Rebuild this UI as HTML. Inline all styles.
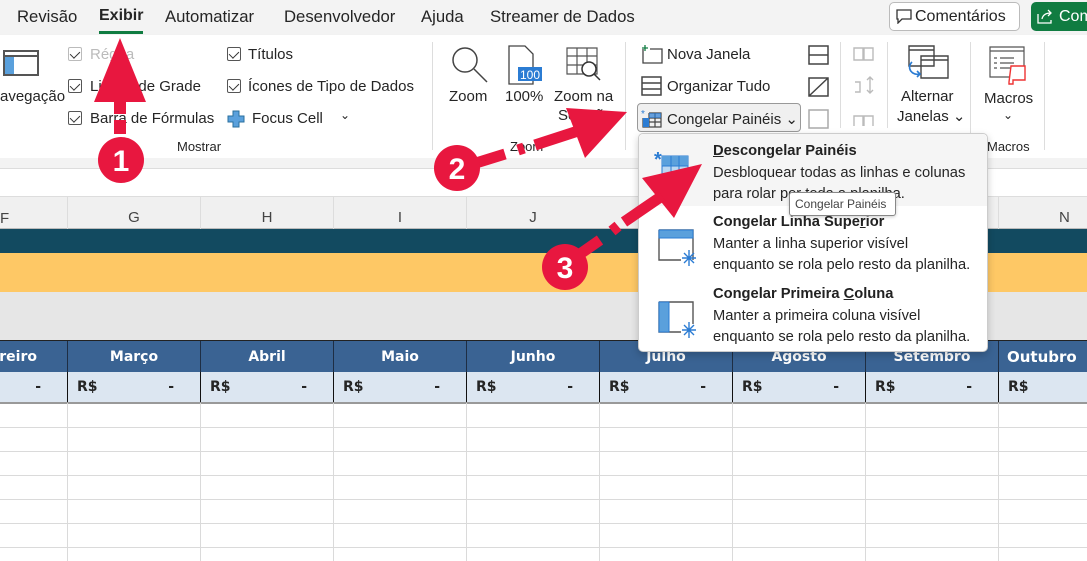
<!DOCTYPE html>
<html><head><meta charset="utf-8"><style>
*{margin:0;padding:0;box-sizing:border-box}
body{width:1087px;height:561px;overflow:hidden;position:relative;background:#fff;font-family:"Liberation Sans","DejaVu Sans",sans-serif;color:#252525}
.a{position:absolute;white-space:nowrap}
.t{font-size:16.7px;top:7px}
.r{font-size:15px}
.cb{position:absolute;width:14px;height:14px;border:1px solid #555;border-radius:2px;background:#fff}
.cb::after{content:"";position:absolute;left:3px;top:1px;width:5px;height:8px;border:solid #333;border-width:0 1.5px 1.5px 0;transform:rotate(45deg)}
.col{position:absolute;top:197px;height:32px;font-size:15px;color:#444;text-align:center;line-height:42px;border-left:1px solid #ddd}
.mh{position:absolute;top:341px;height:31px;background:#3a6393;color:#fff;font-weight:bold;text-align:center;line-height:33px;border-left:1px solid #1e2e44;font-family:"DejaVu Sans",sans-serif;font-size:14px}
.rs{position:absolute;top:372px;height:31px;background:#dce6f1;font-weight:bold;font-size:14px;line-height:31px;border-left:1.5px solid #111;padding-left:9px;font-family:"DejaVu Sans",sans-serif}
.rs span{position:absolute;right:26px}
.vl{position:absolute;top:403px;height:158px;width:1px;background:#dadada}
.hl{position:absolute;left:0;width:1087px;height:1px;background:#dadada}
.mi{position:absolute;left:713px;font-size:14.7px;line-height:21px}
.mi b{color:#222}
</style></head><body>
<div class="a" style="left:0;top:0;width:1087px;height:35px;background:#f3f3f3"></div>
<div class="a t" style="left:17px">Revisão</div>
<div class="a t" style="left:99px;font-weight:bold;font-size:16px">Exibir</div>
<div class="a" style="left:99px;top:31px;width:44px;height:3px;background:#107c41"></div>
<div class="a t" style="left:165px">Automatizar</div>
<div class="a t" style="left:284px">Desenvolvedor</div>
<div class="a t" style="left:421px">Ajuda</div>
<div class="a t" style="left:490px">Streamer de Dados</div>
<div class="a" style="left:889px;top:2px;width:131px;height:29px;border:1px solid #bbb;border-radius:5px;background:#fff;font-size:16px;line-height:27px;padding-left:25px">Comentários</div>
<svg class="a" style="left:896px;top:9px" width="16" height="15"><path d="M1 1h14v9H6l-4 4v-4H1z" fill="none" stroke="#333" stroke-width="1.3"/></svg>
<div class="a" style="left:1031px;top:2px;width:70px;height:29px;border-radius:5px;background:#107c41;color:#fff;font-size:16px;line-height:29px;padding-left:28px">Com</div>
<svg class="a" style="left:1037px;top:9px" width="17" height="15"><path d="M1 5v9h13v-3M5 10c1-5 5-6 9-6M11 1l3 3-3 3" fill="none" stroke="#fff" stroke-width="1.3"/></svg>
<div class="a" style="left:0;top:35px;width:1087px;height:123px;background:#fff;box-shadow:0 2px 3px rgba(0,0,0,.15)"></div>
<div class="a" style="left:3px;top:50px;width:36px;height:26px;border:2px solid #555"><div style="position:absolute;left:0;top:5px;width:9px;height:17px;background:#5aa0dc"></div><div style="position:absolute;left:0;top:3px;width:32px;height:2px;background:#555"></div></div>
<div class="a r" style="left:0;top:88px">avegação</div>
<div class="cb" style="left:68px;top:47px;border-color:#bbb"></div>
<div class="a r" style="left:90px;top:46px;color:#bbb">Régua</div>
<div class="cb" style="left:68px;top:79px"></div>
<div class="a r" style="left:90px;top:78px">Linhas de Grade</div>
<div class="cb" style="left:68px;top:111px"></div>
<div class="a r" style="left:90px;top:110px">Barra de Fórmulas</div>
<div class="cb" style="left:227px;top:47px"></div>
<div class="a r" style="left:248px;top:46px">Títulos</div>
<div class="cb" style="left:227px;top:79px"></div>
<div class="a r" style="left:248px;top:78px">Ícones de Tipo de Dados</div>
<svg class="a" style="left:227px;top:110px" width="18" height="18"><path d="M6 1h6v5h5v6h-5v5H6v-5H1V6h5z" fill="#5aa0dc" stroke="#2a6f9e"/></svg>
<div class="a r" style="left:252px;top:110px">Focus Cell</div>
<div class="a" style="left:340px;top:108px;font-size:12px">⌄</div>
<div class="a" style="left:177px;top:139px;font-size:13px">Mostrar</div>
<div class="a" style="left:432px;top:42px;width:1px;height:108px;background:#ddd"></div>
<svg class="a" style="left:450px;top:45px" width="40" height="40"><circle cx="15" cy="15" r="12" fill="none" stroke="#444" stroke-width="1.5"/><path d="M24 24l13 13" stroke="#444" stroke-width="1.5"/></svg>
<div class="a r" style="left:449px;top:88px">Zoom</div>
<svg class="a" style="left:507px;top:45px" width="36" height="40"><path d="M2 1h16l8 8v30H2z" fill="#fff" stroke="#444" stroke-width="1.3"/><rect x="11" y="22" width="24" height="14" fill="#2b7cd3"/><text x="13" y="34" font-size="12" fill="#fff" font-family="Liberation Sans">100</text></svg>
<div class="a r" style="left:505px;top:88px">100%</div>
<svg class="a" style="left:565px;top:46px" width="40" height="40"><path d="M2 2h30v26H2zM2 10h30M2 19h30M12 2v26M22 2v26" fill="none" stroke="#555" stroke-width="1.2"/><circle cx="24" cy="23" r="7" fill="#fff" stroke="#333" stroke-width="1.5"/><path d="M29 28l6 6" stroke="#333" stroke-width="1.5"/></svg>
<div class="a r" style="left:554px;top:88px">Zoom na</div>
<div class="a r" style="left:558px;top:107px">Seleção</div>
<div class="a" style="left:510px;top:139px;font-size:13px">Zoom</div>
<div class="a" style="left:625px;top:42px;width:1px;height:108px;background:#ddd"></div>
<svg class="a" style="left:641px;top:44px" width="22" height="20"><path d="M2 5v14h19V5H9" fill="none" stroke="#444" stroke-width="1.3"/><path d="M4 1v6M1 4h6" stroke="#107c41" stroke-width="1.3"/></svg>
<div class="a r" style="left:667px;top:46px">Nova Janela</div>
<svg class="a" style="left:641px;top:76px" width="22" height="20"><path d="M1 1h19v18H1zM1 7h19M1 13h19" fill="none" stroke="#444" stroke-width="1.5"/></svg>
<div class="a r" style="left:667px;top:78px">Organizar Tudo</div>
<div class="a" style="left:637px;top:103px;width:164px;height:29px;border:1px solid #999;border-radius:4px;background:#f0f0f0"></div>
<svg class="a" style="left:641px;top:108px" width="22" height="20"><path d="M8 5h12v14H2V10M2 14h18M8 10h12M14 5v14M8 5v14" fill="none" stroke="#444" stroke-width="1.2"/><rect x="2" y="10" width="6" height="9" fill="#2b7cd3"/><rect x="8" y="5" width="12" height="5" fill="#2b7cd3" opacity=".7"/><text x="0" y="9" font-size="10" fill="#2b7cd3">*</text></svg>
<div class="a r" style="left:667px;top:110px">Congelar Painéis ⌄</div>
<svg class="a" style="left:808px;top:45px" width="22" height="20"><path d="M1 1h19v18H1zM1 10h19" fill="none" stroke="#444" stroke-width="1.5"/></svg>
<svg class="a" style="left:808px;top:77px" width="22" height="20"><path d="M1 1h19v18H1zM1 19L20 1" fill="none" stroke="#444" stroke-width="1.5"/></svg>
<svg class="a" style="left:808px;top:109px" width="22" height="20"><path d="M1 1h19v18H1z" fill="none" stroke="#aaa" stroke-width="1.5"/></svg>
<div class="a" style="left:840px;top:42px;width:1px;height:86px;background:#ddd"></div>
<svg class="a" style="left:853px;top:46px" width="22" height="80"><path d="M1 2h9v12H1zM11 2h9v12h-9zM2 36h5v10H2M17 32v14M14 34l3-3 3 3M14 44l3 3 3-3M1 70h9v12H1zM11 70h9v12h-9z" fill="none" stroke="#bbb" stroke-width="1.4"/></svg>
<div class="a" style="left:887px;top:42px;width:1px;height:86px;background:#ddd"></div>
<svg class="a" style="left:904px;top:44px" width="45" height="40"><path d="M5 2h25v20H5zM5 6h25M17 12h27v22H17zM17 16h27" fill="#fff" stroke="#444" stroke-width="1.4"/><path d="M8 18c-6 6 0 14 8 12M13 27l3 3-3 3" fill="none" stroke="#2b7cd3" stroke-width="1.6"/></svg>
<div class="a r" style="left:901px;top:88px">Alternar</div>
<div class="a r" style="left:897px;top:107px">Janelas ⌄</div>
<div class="a" style="left:970px;top:42px;width:1px;height:108px;background:#ddd"></div>
<svg class="a" style="left:989px;top:46px" width="40" height="40"><path d="M1 1h34v30H1zM1 5h34M5 12h3M11 12h14M5 17h3M11 17h14M5 22h3M11 22h10" fill="none" stroke="#555" stroke-width="1.2"/><path d="M22 20h14v14H24v4h-4v-2z" fill="#fff" stroke="#e33" stroke-width="1.4"/></svg>
<div class="a r" style="left:984px;top:90px">Macros</div>
<div class="a" style="left:1003px;top:108px;font-size:12px">⌄</div>
<div class="a" style="left:987px;top:139px;font-size:13px">Macros</div>
<div class="a" style="left:1044px;top:42px;width:1px;height:108px;background:#ddd"></div>
<div class="a" style="left:0;top:158px;width:1087px;height:10px;background:#f3f3f3"></div>
<div class="a" style="left:0;top:168px;width:1087px;height:29px;background:#fff;border-top:1px solid #ddd;border-bottom:1px solid #ddd"></div>
<div class="a" style="left:0;top:197px;width:1087px;height:32px;background:#f0f0f0;border-bottom:1px solid #bbb"></div>
<div class="a" style="left:0;top:210px;font-size:15px;color:#444">F</div>
<div class="col" style="left:67px;width:133px">G</div>
<div class="col" style="left:200px;width:133px">H</div>
<div class="col" style="left:333px;width:133px">I</div>
<div class="col" style="left:466px;width:133px">J</div>
<div class="col" style="left:998px;width:133px;text-align:left;padding-left:60px">N</div>
<div class="a" style="left:0;top:229px;width:1087px;height:24px;background:#124a60"></div>
<div class="a" style="left:0;top:253px;width:1087px;height:39px;background:#fec865"></div>
<div class="a" style="left:0;top:292px;width:1087px;height:49px;background:#e6e6e6;border-bottom:1px solid #222"></div>
<div class="mh" style="left:-66px;width:133px;border:0;text-align:right;padding-right:30px">ereiro</div>
<div class="mh" style="left:67px;width:133px">Março</div>
<div class="mh" style="left:200px;width:133px">Abril</div>
<div class="mh" style="left:333px;width:133px">Maio</div>
<div class="mh" style="left:466px;width:133px">Junho</div>
<div class="mh" style="left:599px;width:133px">Julho</div>
<div class="mh" style="left:732px;width:133px">Agosto</div>
<div class="mh" style="left:865px;width:133px">Setembro</div>
<div class="mh" style="left:998px;width:133px;text-align:left;padding-left:8px;font-size:15px">Outubro</div>
<div class="rs" style="left:-66px;width:133px;border:0"><span>-</span></div>
<div class="rs" style="left:67px;width:133px">R$<span>-</span></div>
<div class="rs" style="left:200px;width:133px">R$<span>-</span></div>
<div class="rs" style="left:333px;width:133px">R$<span>-</span></div>
<div class="rs" style="left:466px;width:133px">R$<span>-</span></div>
<div class="rs" style="left:599px;width:133px">R$<span>-</span></div>
<div class="rs" style="left:732px;width:133px">R$<span>-</span></div>
<div class="rs" style="left:865px;width:133px">R$<span>-</span></div>
<div class="rs" style="left:998px;width:133px">R$</div>
<div class="a" style="left:0;top:402px;width:1087px;height:2px;background:#999"></div>
<div class="vl" style="left:67px"></div><div class="vl" style="left:200px"></div><div class="vl" style="left:333px"></div><div class="vl" style="left:466px"></div><div class="vl" style="left:599px"></div><div class="vl" style="left:732px"></div><div class="vl" style="left:865px"></div><div class="vl" style="left:998px"></div>
<div class="hl" style="top:427px"></div><div class="hl" style="top:451px"></div><div class="hl" style="top:475px"></div><div class="hl" style="top:499px"></div><div class="hl" style="top:523px"></div><div class="hl" style="top:547px"></div>
<div class="a" style="left:638px;top:133px;width:350px;height:219px;background:#fff;border:1px solid #ccc;border-radius:5px;box-shadow:0 3px 8px rgba(0,0,0,.2)"></div>
<div class="a" style="left:639px;top:134px;width:348px;height:72px;background:#f5f5f5;border-radius:5px 5px 0 0"></div>
<svg class="a" style="left:654px;top:148px" width="40" height="40"><rect x="8" y="8" width="26" height="28" fill="#bcd8f2" stroke="#2b7cd3"/><rect x="8" y="8" width="26" height="10" fill="#5aa0dc"/><path d="M17 8v28M25 8v28M8 18h26" stroke="#2b7cd3"/><text x="0" y="18" font-size="20" fill="#2b7cd3" font-weight="bold">*</text></svg>
<div class="mi" style="top:141px"><b style="text-decoration:underline">D</b><b>escongelar Painéis</b></div>
<div class="mi" style="top:163px">Desbloquear todas as linhas e colunas</div>
<div class="mi" style="top:184px">para rolar por toda a planilha.</div>
<svg class="a" style="left:654px;top:226px" width="44" height="44"><path d="M5 4h34v30M5 4v30h22" fill="none" stroke="#555" stroke-width="1.4"/><rect x="5" y="4" width="34" height="8" fill="#5aa0dc" stroke="#2b7cd3"/><path d="M35 24v16M28 32h14M30 27l10 10M40 27l-10 10" stroke="#2b7cd3" stroke-width="1.4"/></svg>
<div class="mi" style="top:212px"><b>Congelar Linha Supe<u>r</u>ior</b></div>
<div class="mi" style="top:234px">Manter a linha superior visível</div>
<div class="mi" style="top:255px">enquanto se rola pelo resto da planilha.</div>
<svg class="a" style="left:654px;top:298px" width="44" height="44"><path d="M5 4h34v22M5 4v30h22" fill="none" stroke="#555" stroke-width="1.4"/><rect x="5" y="4" width="10" height="30" fill="#5aa0dc" stroke="#2b7cd3"/><path d="M35 24v16M28 32h14M30 27l10 10M40 27l-10 10" stroke="#2b7cd3" stroke-width="1.4"/></svg>
<div class="mi" style="top:284px"><b>Congelar Primeira <u>C</u>oluna</b></div>
<div class="mi" style="top:306px">Manter a primeira coluna visível</div>
<div class="mi" style="top:327px">enquanto se rola pelo resto da planilha.</div>
<div class="a" style="left:789px;top:192px;width:107px;height:24px;background:#fff;border:1px solid #888;border-radius:3px;font-size:12px;line-height:22px;padding-left:5px;color:#444;box-shadow:0 1px 3px rgba(0,0,0,.2)">Congelar Painéis</div>
<svg class="a" style="left:0;top:0" width="1087" height="561">
<g fill="#e8173f" stroke="none">
<polygon points="120,38 94,102 146,102"/>
<rect x="114" y="100" width="12" height="14"/><rect x="114" y="120" width="12" height="14"/>
<circle cx="121" cy="160" r="23"/>
<polygon points="627,112 566,108 585,158"/>
<g stroke="#e8173f" stroke-width="11"><path d="M476,163 L505,154 M518,150 L524,148 M535,145 L578,131"/></g>
<circle cx="457" cy="168" r="23"/>
<polygon points="702,164 642,178 674,218"/>
<g stroke="#e8173f" stroke-width="11"><path d="M580,254 L600,240 M612,231 L618,226 M624,222 L662,196"/></g>
<circle cx="565" cy="267" r="23"/>
</g>
<g fill="#fff" font-family="Liberation Sans" font-weight="bold" font-size="30" text-anchor="middle">
<text x="121" y="171">1</text><text x="457" y="179">2</text><text x="565" y="278">3</text></g>
</svg>
</body></html>
